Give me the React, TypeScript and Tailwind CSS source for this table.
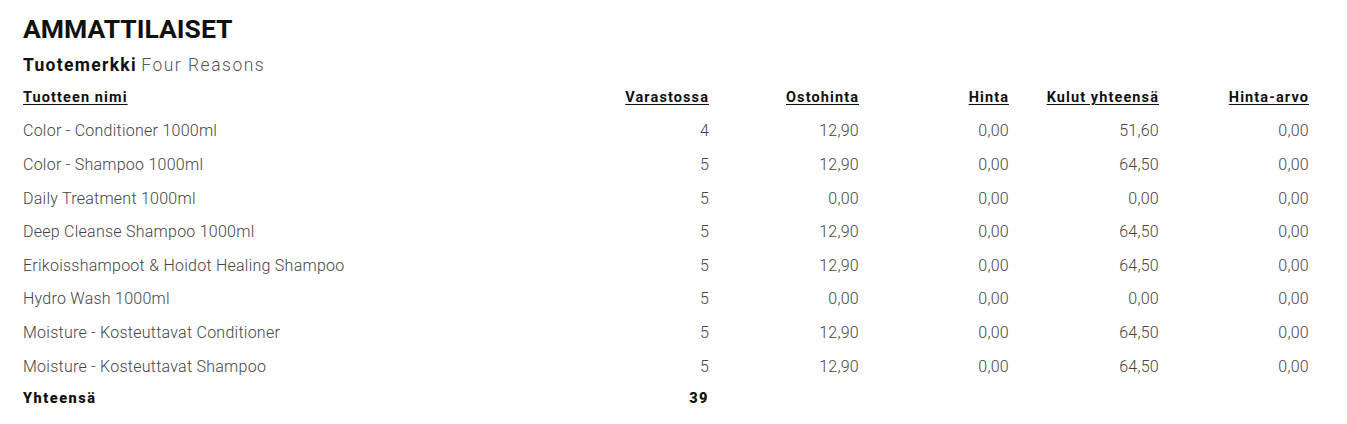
import React from 'react';

interface Row {
  name: string;
  stock: number;
  purchase: string;
  price: string;
  costs: string;
  value: string;
}

const rows: Row[] = [
  { name: 'Color - Conditioner 1000ml', stock: 4, purchase: '12,90', price: '0,00', costs: '51,60', value: '0,00' },
  { name: 'Color - Shampoo 1000ml', stock: 5, purchase: '12,90', price: '0,00', costs: '64,50', value: '0,00' },
  { name: 'Daily Treatment 1000ml', stock: 5, purchase: '0,00', price: '0,00', costs: '0,00', value: '0,00' },
  { name: 'Deep Cleanse Shampoo 1000ml', stock: 5, purchase: '12,90', price: '0,00', costs: '64,50', value: '0,00' },
  { name: 'Erikoisshampoot & Hoidot Healing Shampoo', stock: 5, purchase: '12,90', price: '0,00', costs: '64,50', value: '0,00' },
  { name: 'Hydro Wash 1000ml', stock: 5, purchase: '0,00', price: '0,00', costs: '0,00', value: '0,00' },
  { name: 'Moisture - Kosteuttavat Conditioner', stock: 5, purchase: '12,90', price: '0,00', costs: '64,50', value: '0,00' },
  { name: 'Moisture - Kosteuttavat Shampoo', stock: 5, purchase: '12,90', price: '0,00', costs: '64,50', value: '0,00' },
];

const columns = ['Varastossa', 'Ostohinta', 'Hinta', 'Kulut yhteensä', 'Hinta-arvo'];

export default function App() {
  const total = rows.reduce((sum, r) => sum + r.stock, 0);

  return (
    <div className="min-h-[424px] bg-white pl-[23px] pt-[14px] text-[#111]" style={{ fontFamily: 'Roboto, "Liberation Sans", sans-serif' }}>
      <h1 className="text-[26.5px] font-bold leading-[30px]">AMMATTILAISET</h1>
      <div className="mt-[11px] text-[17.5px] leading-[20px]">
        <span className="font-bold tracking-[1.3px]">Tuotemerkki</span>{' '}
        <span className="font-light tracking-[1.5px] text-[#555]">Four Reasons</span>
      </div>

      <table className="mt-[7px] w-[1286px] border-collapse">
        <thead>
          <tr className="h-[32.6px] text-[14.5px] leading-[1.5] tracking-[1.1px]">
            <th className="w-[536px] p-0 text-left font-bold underline underline-offset-2">Tuotteen nimi</th>
            {columns.map((c) => (
              <th key={c} className="w-[150px] p-0 pl-0 text-right font-bold underline underline-offset-2">
                {c}
              </th>
            ))}
          </tr>
        </thead>
        <tbody className="text-[16px] font-light leading-[1.5] tracking-[0.25px] text-[#444]">
          {rows.map((r) => (
            <tr key={r.name} className="h-[33.6px]">
              <td className="p-0 text-left">{r.name}</td>
              <td className="p-0 text-right">{r.stock}</td>
              <td className="p-0 text-right">{r.purchase}</td>
              <td className="p-0 text-right">{r.price}</td>
              <td className="p-0 text-right">{r.costs}</td>
              <td className="p-0 text-right">{r.value}</td>
            </tr>
          ))}
          <tr className="h-[31px] text-[14.5px] font-black tracking-[1.5px] text-[#111]">
            <td className="p-0 text-left">Yhteensä</td>
            <td className="p-0 text-right">{total}</td>
            <td className="p-0"></td>
            <td className="p-0"></td>
            <td className="p-0"></td>
            <td className="p-0"></td>
          </tr>
        </tbody>
      </table>
    </div>
  );
}
